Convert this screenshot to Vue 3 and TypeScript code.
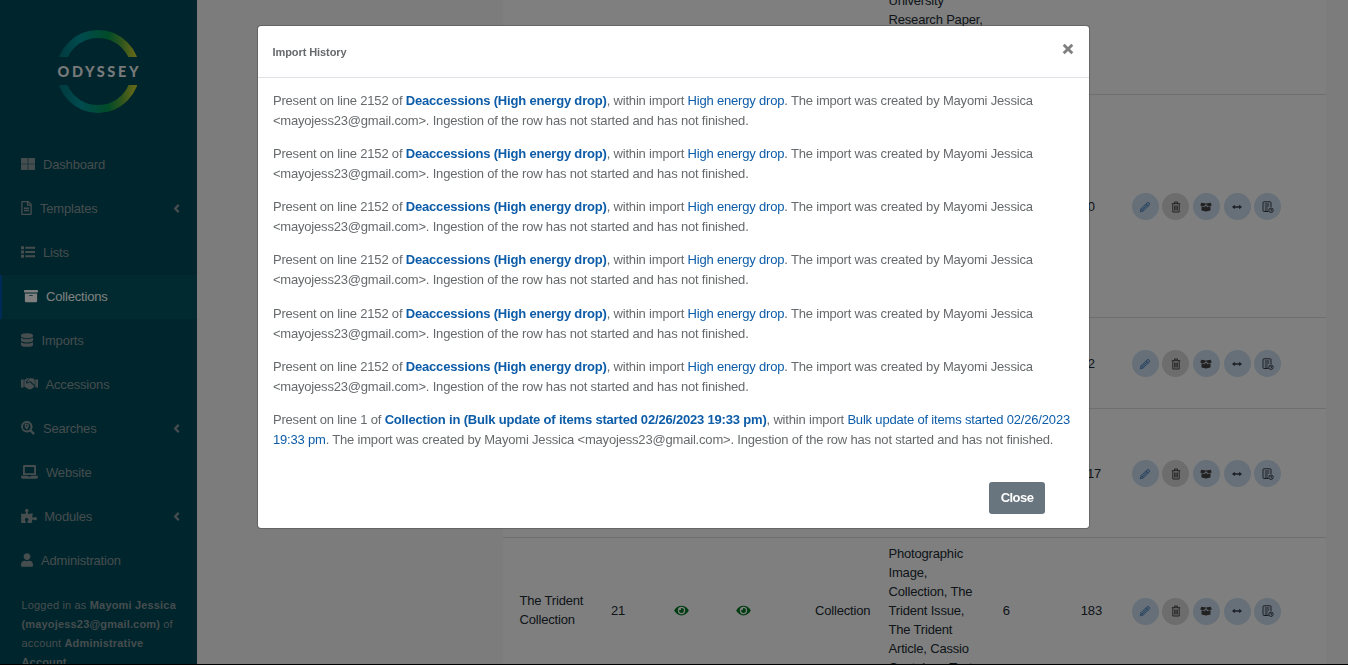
<script setup lang="ts">
import { ref } from 'vue'

interface NavItem { label: string; icon: string; w: number; h: number; vb: string; gap: number; sub?: boolean; active?: boolean }
const nav: NavItem[] = [
  { label: 'Dashboard', icon: 'M.8 0h5.400q.5 0 .5.500v5.200H0V.8Q0 0 .8 0zM7.300 0h5.900q.8 0 .8.800v4.900H7.300zM0 6.300h6.700V12H.8Q0 12 0 11.200zM7.300 6.300H14v4.900q0 .8-.8.800H7.300z', w: 14, h: 12, vb: '0 0 14 12', gap: 8 },
  { label: 'Templates', icon: 'M288 248v28c0 6.600-5.400 12-12 12H108c-6.600 0-12-5.400-12-12v-28c0-6.600 5.400-12 12-12h168c6.600 0 12 5.400 12 12zm-12 72H108c-6.600 0-12 5.400-12 12v28c0 6.600 5.400 12 12 12h168c6.600 0 12-5.400 12-12v-28c0-6.600-5.400-12-12-12zm108-188.100V464c0 26.500-21.500 48-48 48H48c-26.500 0-48-21.500-48-48V48C0 21.500 21.500 0 48 0h204.100C264.800 0 277 5.100 286 14.100L369.900 98c9 8.900 14.100 21.200 14.100 33.900zm-128-80V128h76.100L256 51.900zM336 464V176H232c-13.300 0-24-10.700-24-24V48H48v416h288z', w: 11, h: 14, vb: '0 0 384 512', gap: 8, sub: true },
  { label: 'Lists', icon: 'M0 .2h3v3H0zM0 4.500h3v3H0zM0 8.800h3v3H0zM4.300 .7H14v2H4.300zM4.300 5H14v2H4.300zM4.300 9.300H14v2H4.300z', w: 14, h: 12, vb: '0 0 14 12', gap: 8 },
  { label: 'Collections', icon: 'M32 448c0 17.700 14.300 32 32 32h384c17.700 0 32-14.300 32-32V160H32v288zm160-212c0-6.600 5.400-12 12-12h104c6.600 0 12 5.400 12 12v8c0 6.600-5.400 12-12 12H204c-6.600 0-12-5.400-12-12v-8zM480 32H32C14.300 32 0 46.300 0 64v48c0 8.800 7.200 16 16 16h480c8.800 0 16-7.200 16-16V64c0-17.700-14.300-32-32-32z', w: 14, h: 14, vb: '0 0 512 512', gap: 8, active: true },
  { label: 'Imports', icon: 'M448 73.143v45.714C448 159.143 347.667 192 224 192S0 159.143 0 118.857V73.143C0 32.857 100.333 0 224 0s224 32.857 224 73.143zM448 176v102.857C448 319.143 347.667 352 224 352S0 319.143 0 278.857V176c48.125 33.143 136.208 48.572 224 48.572S399.874 209.143 448 176zm0 160v102.857C448 479.143 347.667 512 224 512S0 479.143 0 438.857V336c48.125 33.143 136.208 48.572 224 48.572S399.874 369.143 448 336z', w: 12, h: 14, vb: '0 0 448 512', gap: 8.5 },
  { label: 'Accessions', icon: 'M0 1.500h2.700v8H0zM14.300 1.500H17v8h-2.700zM3.300 1.900L6 .3h2.300L5 3.400q-.5 1.700 1 2 1 0 2.600-1.500l4.900 4.300-1.600 1.900-1.900 1.200H7.500L4.900 9.500 3.300 8.700zM8.800 .3h2.700l2.300 1.500v5.500L9.300 3 7 4.500 5.900 4z', w: 17, h: 12, vb: '0 0 17 12', gap: 7.5 },
  { label: 'Searches', icon: 'M5.700 0a5.700 5.700 0 1 0 3.200 10.500l3.400 3.500 1.700-1.700-3.500-3.400A5.700 5.700 0 0 0 5.700 0zM5.700 1.900a3.800 3.800 0 1 1 0 7.600 3.800 3.800 0 0 1 0-7.600zM5.700 2.600a2.200 2.200 0 0 0-2.200 2.200c0 1.400 1.300 2.500 2.200 3.900 .9-1.400 2.200-2.500 2.200-3.900a2.200 2.200 0 0 0-2.200-2.200zm0 1.400a.8.8 0 1 1 0 1.600.8.8 0 0 1 0-1.600z', w: 14, h: 14, vb: '0 0 14 14', gap: 8, sub: true },
  { label: 'Website', icon: 'M3.300 0h10.400q1.300 0 1.300 1.300V10H2V1.300Q2 0 3.300 0zM3.900 1.900v6.300h9.200V1.900zM0 10.800h6.700q.1.800.8.800h2q.7 0 .8-.8H17v1q0 1.900-1.700 1.900H1.700Q0 13.700 0 11.800z', w: 17, h: 14, vb: '0 0 17 14', gap: 8 },
  { label: 'Modules', icon: 'M519.442 288.651c-41.519 0-59.500 31.593-82.058 31.593C377.409 320.244 432 144 432 144s-196.288 80-196.288-3.297c0-35.827 36.288-46.250 36.288-85.985C272 19.216 243.885 0 210.539 0c-34.654 0-66.366 18.891-66.366 56.346 0 41.364 31.711 59.277 31.711 81.750C175.885 207.719 0 166.758 0 166.758v333.237s178.635 41.047 178.635-28.662c0-22.473-40-40.107-40-81.471 0-37.456 29.250-56.346 63.577-56.346 33.673 0 61.788 19.216 61.788 54.717 0 39.735-36.288 50.158-36.288 85.985 0 60.803 129.675 25.730 181.230 25.730 0 0-34.725-120.101 25.827-120.101 35.962 0 46.423 36.152 86.308 36.152C556.712 416 576 387.990 576 354.443c0-34.199-18.962-65.792-56.558-65.792z', w: 16, h: 14, vb: '0 0 576 512', gap: 7.2, sub: true },
  { label: 'Administration', icon: 'M224 256c70.700 0 128-57.300 128-128S294.700 0 224 0 96 57.300 96 128s57.300 128 128 128zm89.600 32h-16.700c-22.200 10.200-46.900 16-72.900 16s-50.600-5.800-72.900-16h-16.700C60.200 288 0 348.200 0 422.400V464c0 26.500 21.500 48 48 48h352c26.500 0 48-21.500 48-48v-41.600c0-74.200-60.200-134.400-134.400-134.400z', w: 12, h: 14, vb: '0 0 448 512', gap: 8 },
]

interface Row { cls: string; name?: string; id?: string; type?: string; kinds?: string; a?: string; count?: string; actions: boolean }
const rows: Row[] = [
  { cls: 'r1', kinds: 'University Research Paper,', actions: false },
  { cls: 'r2', count: '10', actions: true },
  { cls: 'r3', count: '12', actions: true },
  { cls: 'r4', count: '117', actions: true },
  { cls: 'r5', name: 'The Trident Collection', id: '21', type: 'Collection', kinds: 'Photographic Image, Collection, The Trident Issue, The Trident Article, Cassio Container, Text', a: '6', count: '183', actions: true },
]

const bulk = 'Bulk update of items started 02/26/2023 19:33 pm'
const entries = [
  ...Array.from({ length: 6 }, () => ({ line: 2152, title: 'Deaccessions (High energy drop)', source: 'High energy drop' })),
  { line: 1, title: `Collection in (${bulk})`, source: bulk },
]
const open = ref(true)
const eye = 'M572.520 241.400C518.290 135.590 410.930 64 288 64S57.680 135.640 3.480 241.410a32.350 32.350 0 0 0 0 29.190C57.710 376.410 165.070 448 288 448s230.320-71.640 284.520-177.410a32.350 32.350 0 0 0 0-29.190zM288 400a144 144 0 1 1 144-144 143.930 143.930 0 0 1-144 144zm0-240a95.310 95.310 0 0 0-25.310 3.790 47.850 47.850 0 0 1-66.900 66.900A95.780 95.780 0 1 0 288 160z'
</script>

<template>
  <div class="page">
    <aside class="sidebar">
      <div class="logo">
        <svg width="84" height="86" viewBox="0 0 84 86">
          <defs>
            <linearGradient id="ring" x1="0" x2="84" y1="0" y2="0" gradientUnits="userSpaceOnUse">
              <stop offset="0" stop-color="#006e78" />
              <stop offset=".3" stop-color="#00989e" />
              <stop offset=".62" stop-color="#009650" />
              <stop offset=".78" stop-color="#5cab3c" />
              <stop offset=".92" stop-color="#bfcc30" />
              <stop offset="1" stop-color="#d2dc32" />
            </linearGradient>
            <clipPath id="arcs"><path d="M0 0h84v28H0zM0 56h84v30H0z" /></clipPath>
          </defs>
          <circle cx="42" cy="42.500" r="37.500" fill="none" stroke="url(#ring)" stroke-width="8" clip-path="url(#arcs)" />
          <text x="1.500" y="47.500" textLength="82" class="wordmark">ODYSSEY</text>
        </svg>
      </div>
      <nav>
        <a v-for="n in nav" :key="n.label" class="item" :class="{ active: n.active }">
          <svg class="ico" :width="n.w" :height="n.h" :viewBox="n.vb"><path :d="n.icon" fill="currentColor" fill-rule="evenodd" /></svg>
          <span :style="{ marginLeft: n.gap + 'px' }">{{ n.label }}</span>
          <svg v-if="n.sub" class="chev" width="7" height="9" viewBox="0 0 7 9"><path d="M5.700 .9L2.200 4.500 5.700 8.100" fill="none" stroke="currentColor" stroke-width="2.300" /></svg>
        </a>
      </nav>
      <p class="account">Logged in as <b>Mayomi Jessica<br>(mayojess23@gmail.com)</b> of<br>account <b>Administrative<br>Account</b></p>
    </aside>

    <main class="main">
      <div class="table">
        <div v-for="r in rows" :key="r.cls" class="row" :class="r.cls">
          <div class="name">{{ r.name }}</div>
          <div>{{ r.id }}</div>
          <div><svg v-if="r.name" width="15" height="13" viewBox="0 0 576 512"><path :d="eye" fill="#007a24" /></svg></div>
          <div><svg v-if="r.name" width="15" height="13" viewBox="0 0 576 512"><path :d="eye" fill="#007a24" /></svg></div>
          <div>{{ r.type }}</div>
          <div class="kinds">{{ r.kinds }}</div>
          <div>{{ r.a }}</div>
          <div>{{ r.count }}</div>
          <div class="actions">
            <template v-if="r.actions">
              <i class="edit"><svg width="12" height="12" viewBox="0 0 12 12"><path d="M1.200 10.800l.8-3L8 1.800q1-.8 1.900 0l.4.400q.8 1 0 1.900L4.200 10zM7 2.800L9.300 5M2 7.800L4.200 10M3.300 8.800l4.700-4.700" /></svg></i>
              <i class="bin"><svg width="12" height="12" viewBox="0 0 12 12"><path d="M1.800 2.700h8.400M4.500 2.500V1h3v1.500M2.800 3v8h6.400V3M4.700 4.500v5M6 4.500v5M7.300 4.500v5" /></svg></i>
              <i class="box"><svg width="12" height="12" viewBox="0 0 12 12"><path class="solid" d="M1.300 1.700L6 2.400l4.700-.7 1.100 2.800-3.700 1L6 3 3.900 5.500.2 4.500zM1.500 5.200l2.900 1L6 4.400l1.600 1.800 2.900-1v4.300L6 10.500 1.500 9.500z" /></svg></i>
              <i><svg width="12" height="12" viewBox="0 0 12 12"><path class="solid" d="M1 6l2.800-2.300v1.600h4.400V3.700L11 6 8.200 8.300V6.700H3.800v1.600z" /></svg></i>
              <i class="log"><svg width="12" height="12" viewBox="0 0 12 12"><path d="M6.500 10.500H1.800Q1 10.500 1 9.500v-8Q1 .8 1.800.8h6.400q.8 0 .8.700V6M2.800 3h4.500M2.800 5h4.500M2.800 7h3M2.800 9h3" /><circle cx="9" cy="9.200" r="2.200" /><path d="M9 8v1.300h1" /></svg></i>
            </template>
          </div>
        </div>
      </div>
    </main>
  </div>

  <div v-if="open" class="backdrop">
    <section class="modal" role="dialog">
      <header>
        <h5>Import History</h5>
        <button class="x" aria-label="Close" @click="open = false"><svg width="12" height="12" viewBox="0 0 12 12"><path d="M1.700 1.700l8.600 8.600M10.300 1.700l-8.600 8.600" stroke="#7f7f7f" stroke-width="2.800" /></svg></button>
      </header>
      <div class="body">
        <p v-for="(e, i) in entries" :key="i">Present on line {{ e.line }} of <a class="strong">{{ e.title }}</a>, within import <a>{{ e.source }}</a>. The import was created by Mayomi Jessica &lt;mayojess23@gmail.com&gt;. Ingestion of the row has not started and has not finished.</p>
      </div>
      <footer><button class="close" @click="open = false">Close</button></footer>
    </section>
  </div>
</template>

<style>
body { background: #000; overflow: hidden; }
</style>
<style scoped>
* { box-sizing: border-box; }
.page { display: flex; height: 664px; overflow: hidden; background: #f8f8f8; font: 13px/19px "Liberation Sans", Arial, sans-serif; letter-spacing: -0.18px; }
.sidebar { width: 197px; flex: none; background: #004a58; color: #8b9a9e; }
.logo { height: 142.500px; padding: 28.500px 0 0 56px; }
.logo svg { display: block; }
.wordmark { font: 900 14.500px Lato, sans-serif; fill: #fff; fill-opacity: .95; letter-spacing: 1px; }
.item { display: flex; align-items: center; height: 44px; padding: 0 17px 0 21px; color: inherit; }
.item.active { background: #005460; color: #fff; border-left: 2px solid #0056b3; padding-left: 22px; }
.ico { flex: none; position: relative; top: -.5px; }
.chev { margin-left: auto; }
.account { margin: 13px 0 0 21.500px; font-size: 11px; letter-spacing: .17px; white-space: nowrap; }
.main { flex: 1; padding: 0 22px 0 306px; }
.table { background: #fff; min-height: 664px; color: #212b33; }
.row { display: grid; grid-template-columns: 91.500px 63px 62px 79px 73.500px 114.300px 78px 51px 1fr; padding-left: 16.500px; align-items: center; border-bottom: 1px solid #dcdee0; }
.row svg { display: block; }
.name { padding-bottom: 2px; }
.kinds { width: 96px; }
.r1 { height: 95px; align-items: start; }
.r1 .kinds { margin-top: -9px; }
.r2 { height: 223px; }
.r3 { height: 91px; }
.r4 { height: 129px; }
.r5 { height: 146px; }
.actions { display: flex; gap: 3.600px; padding-top: 1px; }
.actions i { width: 27px; height: 27px; border-radius: 50%; background: #cfe0f0; display: grid; place-items: center; color: #343c48; }
.actions .edit { color: #4a86c0; }
.actions .edit svg { fill: #a6c4e2; stroke-width: .9; }
.actions .bin { background: #dadada; color: #444; }
.actions .box { color: #444; }
.actions svg { fill: none; stroke: currentColor; stroke-width: 1; }
.actions .solid { fill: currentColor; stroke: none; }
.backdrop { position: fixed; inset: 0; background: rgba(0, 0, 0, .5); font: 13px/20px "Liberation Sans", Arial, sans-serif; letter-spacing: -0.185px; }
.modal { width: 833px; height: 504px; margin: 25px 0 0 257px; background: #fff; background-clip: padding-box; border: 1px solid rgba(0, 0, 0, .2); border-radius: 4px; color: #676a6c; }
header { height: 52px; display: flex; justify-content: space-between; border-bottom: 1px solid #dee2e6; padding: 0 15px 0 14.500px; }
h5 { margin: 16px 0 0; font-size: 11px; letter-spacing: -0.08px; }
.x { border: 0; background: none; padding: 0; margin-top: 17px; height: 12px; }
.x svg { display: block; }
.body { padding: 12.800px 14px 0 14.900px; height: 404px; }
p { margin: 0 0 13.200px; }
a { color: #0d5ca8; }
.strong { font-weight: 700; letter-spacing: -0.185px; }
footer { display: flex; justify-content: flex-end; padding-right: 44px; }
.close { width: 56px; height: 32px; border: 0; border-radius: 3px; background: #68757f; color: #fff; font: 700 13px "Liberation Sans", Arial, sans-serif; letter-spacing: -.55px; padding: 0 0 2px; }
</style>
